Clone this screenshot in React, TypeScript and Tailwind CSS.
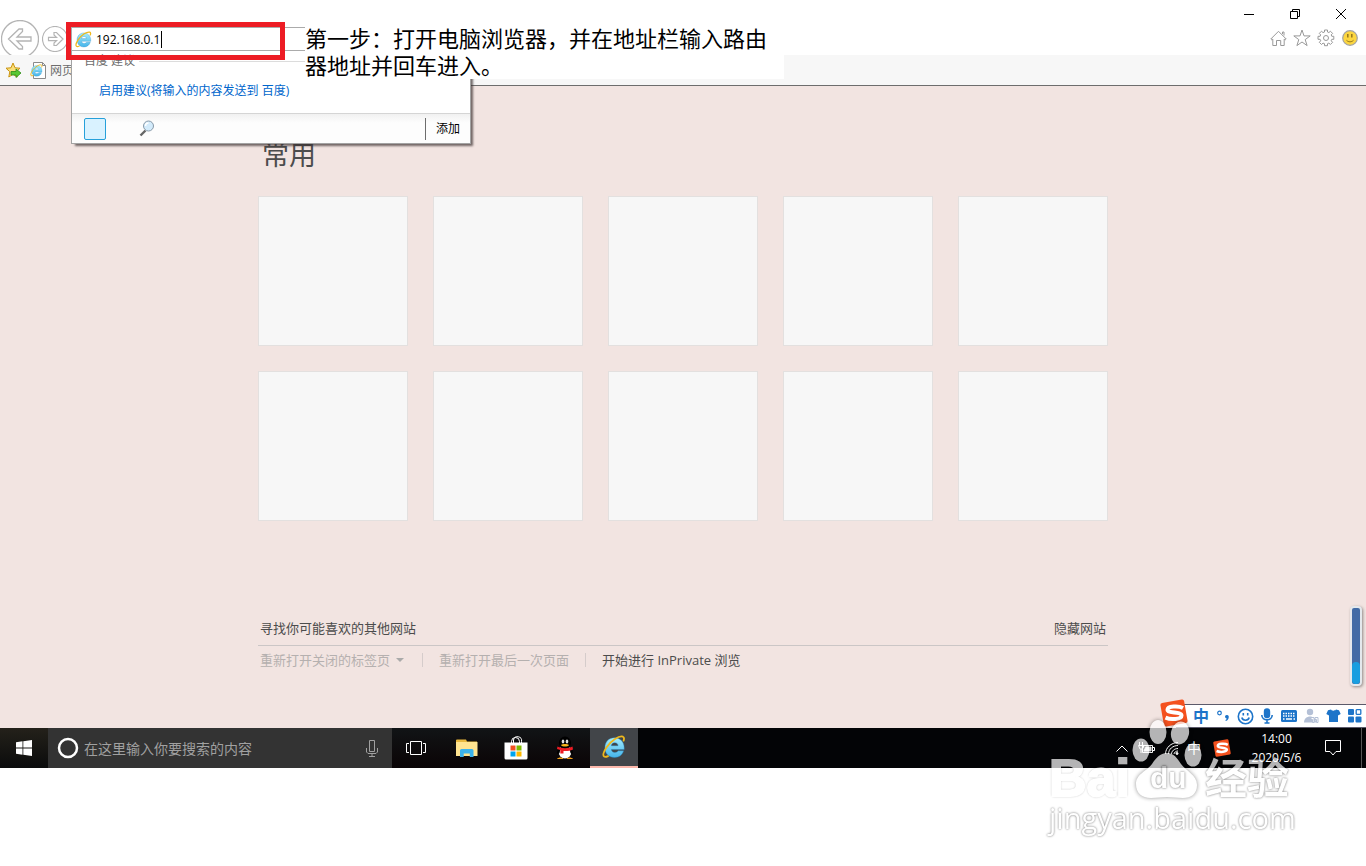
import { useState } from 'react';

const uiFont = "font-['Open_Sans','Noto_Sans_CJK_SC',sans-serif]";

function IeLogo({ size }: { size: number }) {
  return (
    <svg width={size} height={size} viewBox="0 0 24 24" fill="none">
      <defs>
        <linearGradient id="ie" x1="0" y1="0" x2="0" y2="1">
          <stop offset="0" stopColor="#a4ecfd" />
          <stop offset="1" stopColor="#45b4ea" />
        </linearGradient>
      </defs>
      <path
        d="M12.5 2.800c5.700 0 9.700 4.200 9.700 10v1.800H9.300c.3 1.900 1.700 2.900 3.600 2.900 1.500 0 2.600-.6 3.200-1.700h5.500c-1.200 4.200-4.600 6.700-9 6.700-5.700 0-9.700-4-9.700-9.800s3.900-9.900 9.600-9.900zM9.300 10.700h6.800c-.2-1.900-1.500-3-3.400-3s-3.200 1.100-3.400 3z"
        fill="url(#ie)"
        stroke="#2583bd"
        strokeWidth="0.4"
      />
      <path
        d="M21.600 5.600C22.400 3.400 22 2.200 20.900 1.700 17.200.4 9 5.500 4.600 12.200c-3 4.600-4 8.300-2.400 9.400.9.600 2.200.3 3.800-.5"
        stroke="#efb81c"
        strokeWidth="1.800"
        strokeLinecap="round"
      />
    </svg>
  );
}

function SogouLogo({ size }: { size: number }) {
  return (
    <svg width={size} height={size} viewBox="0 0 28 28" fill="none">
      <rect x="2" y="2" width="24" height="24" rx="2" fill="#f4511e" transform="rotate(-10 14 14)" />
      <path
        d="M23 9C18.500 6.500 7.500 7 7.500 10.700c0 3.800 14 1.800 14 5.800 0 3.900-10.500 4.600-16 2.200"
        stroke="#fff"
        strokeWidth="4"
      />
    </svg>
  );
}

function Header() {
  return (
    <header className="flex h-[55px] items-start justify-between overflow-hidden bg-white">
      <div className="flex items-start pl-px pt-5">
        <button aria-label="后退">
          <svg width="38" height="38" viewBox="0 0 38 38" fill="none" stroke="#b4b4b4">
            <circle cx="19" cy="19" r="18.500" strokeWidth="1.300" />
            <path d="M7.500 19 18 9h3.500v2.500L16 17h14v4H16l5.500 5.500V29H18z" strokeWidth="1.300" />
          </svg>
        </button>
        <button aria-label="前进" className="ml-[3px] mt-1.5">
          <svg width="26" height="26" viewBox="0 0 26 26" fill="none" stroke="#b4b4b4">
            <circle cx="13" cy="13" r="12.500" strokeWidth="1.200" />
            <path d="M21 13l-6.500 6.500H12V17l2.500-2.300h-8v-3.400h8L12 9V6.500h2.500z" strokeWidth="1.200" />
          </svg>
        </button>
        <AddressBar />
      </div>
      <div className="flex flex-col items-end">
        <div className="flex h-7 pr-0.5">
          <button aria-label="最小化" className="flex w-[46px] items-center justify-center">
            <svg width="10" height="10" stroke="#000">
              <path d="M0 5.500h10" />
            </svg>
          </button>
          <button aria-label="还原" className="flex w-[46px] items-center justify-center">
            <svg width="10" height="10" fill="none" stroke="#000">
              <path d="M.5 2.500h7v7h-7zM2.500 2.500v-2h7v7h-2" />
            </svg>
          </button>
          <button aria-label="关闭" className="flex w-[46px] items-center justify-center">
            <svg width="10" height="10" stroke="#000">
              <path d="M0 0l10 10M10 0 0 10" />
            </svg>
          </button>
        </div>
        <div className="flex h-5 pr-1">
          <button aria-label="主页" className="flex w-6 items-center justify-center">
            <svg width="17" height="17" viewBox="0 0 17 17" fill="none" stroke="#999">
              <path d="M.8 9 8.500 1.300 16.200 9l-1 .9-1-.8v6.400h-3.500v-5H6.500v5H2.800V9.100l-1 .8zM12.500 4V2h1.500v3.500" />
            </svg>
          </button>
          <button aria-label="收藏夹" className="flex w-6 items-center justify-center">
            <svg width="18" height="18" viewBox="0 0 18 18" fill="none" stroke="#999">
              <path d="M9 1l2 5.900h6.200l-5 3.700 1.900 6L9 13l-5.100 3.600 1.900-6-5-3.700H7z" />
            </svg>
          </button>
          <button aria-label="工具" className="flex w-6 items-center justify-center">
            <svg width="18" height="18" viewBox="0 0 18 18" fill="none" stroke="#999">
              <path d="M7.500 1h3v2l1.400.6 1.500-1.400 2.200 2.200-1.400 1.500.6 1.400h2v3h-2l-.6 1.500 1.400 1.500-2.200 2.200-1.500-1.400-1.400.6v2h-3v-2L6 14.100l-1.500 1.400-2.200-2.200 1.400-1.500-.6-1.500H1v-3h2.100l.6-1.400-1.400-1.500 2.200-2.200L6 3.600 7.500 3z" />
              <circle cx="9" cy="9" r="2.500" />
            </svg>
          </button>
          <button aria-label="反馈" className="flex w-6 items-center justify-center">
            <svg width="16" height="16" viewBox="0 0 16 16" fill="none">
              <circle cx="8" cy="8" r="7.300" fill="#fcd640" stroke="#a3a3a3" strokeWidth="1.200" />
              <path d="M5.800 4v3.500M9.800 4v3.500" stroke="#94771c" strokeWidth="1.500" />
              <path d="M4.500 10.300c2 2 5 2 7 0" stroke="#94771c" />
            </svg>
          </button>
        </div>
      </div>
    </header>
  );
}

function AddressBar() {
  const [url, setUrl] = useState('192.168.0.1');

  return (
    <div className="ml-[3px] mt-[7px] flex h-6 w-[234px] items-center border-y border-l border-[#ababab] bg-white pl-[3px]">
      <IeLogo size={17} />
      <input
        type="text"
        aria-label="地址"
        value={url}
        onChange={(e) => setUrl(e.target.value)}
        className="ml-1 w-[65px] pt-0.5 text-xs text-black outline-none"
      />
      <span className="h-[17px] w-px bg-black" />
    </div>
  );
}

function FavoritesBar() {
  return (
    <nav className="flex h-[31px] items-center border-b border-[#6d6d6d] bg-[#f7f7f7] pl-[5px]">
      <button aria-label="添加到收藏夹栏">
        <svg width="17" height="17" viewBox="0 0 17 17">
          <path d="M8 1l2 4.800 5 .4-3.800 3.500 1 5.300L8 12.300 3.800 15l1-5.300L1 6.200l5-.4z" fill="#fbe07a" stroke="#c99411" />
          <path d="M6 9.500h5V7l5 4-5 4.500V13H6z" fill="#59c834" stroke="#2f8c18" strokeWidth="0.800" />
        </svg>
      </button>
      <a href="#" className="ml-2 flex items-center text-xs text-[#6d6d6d]">
        <span className="relative">
          <svg width="17" height="17" viewBox="0 0 17 17">
            <path d="M3.500.5h9l3 3v13h-12zM12.500.5v3h3" fill="#fff" stroke="#8a8a8a" />
          </svg>
          <span className="absolute left-0 top-0.5">
            <IeLogo size={13} />
          </span>
        </span>
        <span className="ml-[3px] pt-0.5">网页</span>
      </a>
    </nav>
  );
}

function SuggestionMenu() {
  return (
    <div className="absolute left-[71px] top-[51px] w-[400px] border border-t-0 border-[#a3a3a3] bg-white shadow-[3px_3px_2px_-1px_rgba(60,50,50,0.7)]">
      <div className="flex h-[19px] items-center pl-3 text-xs text-[#6d6d6d]">
        <span>百度 建议</span>
        <span className="ml-1 mt-0.5 h-px flex-1 bg-[#dcdcdc]" />
      </div>
      <a href="#" className="flex h-[43px] items-center pb-0.5 pl-[27px] text-xs text-[#0066cc]">
        启用建议(将输入的内容发送到 百度)
      </a>
      <div className="flex h-[30px] items-center border-t border-[#d5d5d5] bg-linear-to-b from-[#f1f1f1] to-[#fdfdfd] to-30% pl-3">
        <button aria-label="百度" className="size-[22px] rounded-xs border border-[#26a0da] bg-[#d9f2ff]" />
        <button aria-label="搜索" className="ml-[33px]">
          <svg width="16" height="17" viewBox="0 0 16 17">
            <path d="M6.500 10.500l-5 5" stroke="#666" strokeWidth="2.400" />
            <circle cx="9.500" cy="6" r="5" fill="#d3ebfb" stroke="#8899a8" />
            <path d="M6.500 6c0-2 1.500-3 3-3" fill="none" stroke="#fff" strokeWidth="1.500" />
          </svg>
        </button>
        <span className="ml-auto h-[22px] w-px bg-[#6d6d6d]" />
        <button className="px-2.5 text-xs text-black">添加</button>
      </div>
    </div>
  );
}

function NewTabPage() {
  return (
    <main className="relative bg-[#f2e4e1] pt-[51px] pb-[58px]">
      <div className="mx-auto max-w-[850px] text-[13px] leading-5 text-[#4c4c4c]">
        <h1 className="pl-1 text-[27px] leading-9">常用</h1>
        <div className="mt-[23px] grid grid-cols-5 gap-[25px]">
          {Array.from({ length: 10 }, (_, i) => (
            <div key={i} className="aspect-square border border-[#e3e0df] bg-[#f7f7f7]" />
          ))}
        </div>
        <div className="mt-[97px] flex h-7 justify-between border-b border-[#cbc6c6] px-0.5">
          <a href="#">寻找你可能喜欢的其他网站</a>
          <a href="#">隐藏网站</a>
        </div>
        <div className="flex items-center pl-0.5 pt-1">
          <button className="flex items-center text-[#b5b0af]" disabled>
            重新打开关闭的标签页
            <svg width="8" height="4" className="ml-1.5">
              <path d="M0 0h8L4 4z" fill="#aaa" />
            </svg>
          </button>
          <span className="ml-[18px] h-3.5 w-px bg-[#d5cccb]" />
          <button className="ml-4 text-[#b5b0af]" disabled>重新打开最后一次页面</button>
          <span className="ml-4 h-3.5 w-px bg-[#d5cccb]" />
          <a href="#" className="ml-4">开始进行 InPrivate 浏览</a>
        </div>
      </div>

      <div className="absolute right-1 bottom-[42px] flex h-20 w-3 items-end rounded-sm border-2 border-[#e4e8ec] bg-[#416ba6] shadow-[1px_1px_3px_rgba(0,0,0,0.4)]">
        <div className="h-[22px] w-full rounded-sm bg-[#189ee0]" />
      </div>
      <ImeBar />
    </main>
  );
}

function ImeBar() {
  return (
    <div className="absolute right-0 bottom-0 flex h-6 w-[190px] items-center border-y border-[#5c5a6a] bg-white text-[#1d74c9]">
      <span className="absolute -left-4 bottom-0">
        <SogouLogo size={28} />
      </span>
      <div className="ml-auto flex items-center">
        <button className="w-[22px] text-base leading-5 font-bold">中</button>
        <button aria-label="标点" className="flex w-[22px] justify-center">
          <svg width="14" height="14" viewBox="0 0 14 14">
            <circle cx="3.500" cy="4" r="1.800" fill="none" stroke="currentColor" strokeWidth="1.200" />
            <path d="M9 7.500a2 2 0 0 1 3.800 0c0 2.500-1.200 4-3 4.500l-.4-1c.8-.3 1.200-.9 1.300-1.600C9.700 9.400 9 8.600 9 7.500z" fill="currentColor" />
          </svg>
        </button>
        <button aria-label="表情" className="flex w-[22px] justify-center">
          <svg width="17" height="17" viewBox="0 0 17 17" fill="none" stroke="currentColor" strokeWidth="1.600">
            <circle cx="8.500" cy="8.500" r="7.200" />
            <path d="M6.300 5v2.500M10.700 5v2.500M4.800 9.500c1 3.600 6.400 3.600 7.400 0" />
          </svg>
        </button>
        <button aria-label="语音" className="flex w-[22px] justify-center">
          <svg width="14" height="16" viewBox="0 0 14 16" fill="none" stroke="currentColor" strokeWidth="1.600">
            <rect x="4.600" y="1" width="4.800" height="8.500" rx="2.400" fill="currentColor" />
            <path d="M1.800 7c0 6.500 10.400 6.500 10.400 0M7 12v3M4.500 15h5" />
          </svg>
        </button>
        <button aria-label="键盘" className="flex w-[22px] justify-center">
          <svg width="16" height="12" viewBox="0 0 16 12">
            <rect width="16" height="12" rx="1.500" fill="currentColor" />
            <path d="M2 3.500h12M2 6h12" stroke="#fff" strokeWidth="1.400" strokeDasharray="1.500 1" />
            <path d="M2 9h1.500M5 9h6M12.500 9H14" stroke="#fff" strokeWidth="1.400" />
          </svg>
        </button>
        <button aria-label="账户" className="flex w-[22px] justify-center text-[#b4c0d6]">
          <svg width="16" height="16" viewBox="0 0 16 16">
            <circle cx="7" cy="4" r="3.200" fill="currentColor" />
            <path d="M1 14.500c0-8 12-8 12 0z" fill="currentColor" />
            <path d="M8 9.500h3v5H9.500v-3H8zM12 9.500h3v5h-1.500v-3H12z" fill="#fff" stroke="currentColor" />
          </svg>
        </button>
        <button aria-label="皮肤" className="flex w-[22px] justify-center">
          <svg width="15" height="14" viewBox="0 0 15 14">
            <path d="M5 .5c.8 1.600 4.200 1.600 5 0l3 .8 1.700 3.700-2.700 1.500V13H3V6.500L.3 5 2 1.300z" fill="currentColor" />
          </svg>
        </button>
        <button aria-label="工具箱" className="flex w-[22px] justify-center">
          <svg width="14" height="14" viewBox="0 0 14 14" fill="currentColor">
            <rect width="6" height="6" rx="1" />
            <rect y="7.500" width="6" height="6" rx="1" />
            <rect x="7.500" y="7.500" width="6" height="6" rx="1" />
            <rect x="8.200" y=".7" width="4.600" height="4.600" rx=".5" fill="none" stroke="currentColor" strokeWidth="1.300" />
          </svg>
        </button>
      </div>
    </div>
  );
}

function Taskbar() {
  return (
    <footer className="flex h-10 bg-[#030406] text-white">
      <button aria-label="开始" className="flex w-12 items-center justify-center bg-linear-to-b from-[#24211a] to-[#0b0c0c]">
        <svg width="16" height="16" viewBox="0 0 16 16" fill="#fff">
          <path d="M0 2.200 6.500 1.300v6.300H0zM7.300 1.200 16 0v7.600H7.300zM0 8.400h6.500v6.300L0 13.800zM7.300 8.400H16V16l-8.700-1.200z" />
        </svg>
      </button>
      <label className="flex w-[344px] items-center bg-[#333] pl-[9px] pr-3.5">
        <svg width="22" height="22" fill="none" stroke="#fff" strokeWidth="2.500">
          <circle cx="11" cy="11" r="9" />
        </svg>
        <input
          type="text"
          aria-label="搜索"
          placeholder="在这里输入你要搜索的内容"
          className="ml-[5px] min-w-0 flex-1 pt-0.5 text-sm outline-none placeholder:text-[#a0a0a0]"
        />
        <svg width="12" height="17" viewBox="0 0 12 17" fill="none" stroke="#a0a0a0">
          <path d="M3.500.5h5v11h-5zM.5 8v4l1.500 1.500h8l1.500-1.500V8M6 13.500v3M3 16.500h6" />
        </svg>
      </label>
      <div className="flex bg-linear-to-b from-[#111416] to-[#0a0506]">
        <button aria-label="任务视图" className="flex w-12 items-center justify-center">
          <svg width="20" height="14" viewBox="0 0 20 14" fill="none" stroke="#fff">
            <path d="M4.500.5h11v13h-11zM3 2.500H.5v9H3M17 2.500h2.500v9H17" />
          </svg>
        </button>
        <div className="ml-[3px] flex gap-px">
          <button aria-label="文件资源管理器" className="flex w-12 items-center justify-center">
            <svg width="22" height="18" viewBox="0 0 22 18">
              <path d="M0 1.500Q0 .5 1 .5h9l1 2h10V17H0z" fill="#e9b93f" />
              <path d="M0 3h21.500v14H0z" fill="#ffe490" />
              <path d="M4 18v-6.500Q4 10 5.500 10H16q1.500 0 1.500 1.500V18h-3.700v-3.500H7.700V18z" fill="#3bb3ec" />
            </svg>
          </button>
          <button aria-label="应用商店" className="flex w-12 items-center justify-center">
            <svg width="24" height="24" viewBox="0 0 24 24">
              <path d="M7.500 8V5.500a4 4 0 0 1 8 0V8M9.500 8V4a3.500 3.500 0 0 1 8 1.500V8" fill="none" stroke="#fff" />
              <path d="M.5 6.500h23V22q0 1.500-1.500 1.500H2Q.5 23.500.5 22z" fill="#fff" />
              <path d="M6.500 9.500h5v5h-5z" fill="#f25022" />
              <path d="M12.500 9.500h5v5h-5z" fill="#7fba00" />
              <path d="M6.500 15.500h5v5h-5z" fill="#00a4ef" />
              <path d="M12.500 15.500h5v5h-5z" fill="#ffb900" />
            </svg>
          </button>
          <button aria-label="QQ" className="flex w-12 items-center justify-center">
            <svg width="18" height="24" viewBox="0 0 18 24">
              <ellipse cx="9" cy="16" rx="6.500" ry="6.500" fill="#fff" />
              <path d="M3 12C1 14 .5 17 1.500 18c1 .5 2-1 2-1l1-4zM15 12c2 2 2.500 5 1.500 6-1 .5-2-1-2-1l-1-4z" fill="#000" />
              <ellipse cx="9" cy="7" rx="6" ry="6.500" fill="#000" />
              <ellipse cx="7" cy="5.500" rx="1.300" ry="2" fill="#ddd" />
              <ellipse cx="11" cy="5.500" rx="1.300" ry="2" fill="#ddd" />
              <path d="M5 9c2-1.200 6-1.200 8 0-1 2-7 2-8 0z" fill="#f6b31b" />
              <path d="M1.500 10.500c4 2.300 11 2.300 15 0l.5 3c-3 1.300-6 1.800-9.500 1.500v2.500H4.300v-3.500L1 13z" fill="#ed1c24" />
              <path d="M1 23c1-2 6-2 6.500 0zM10.500 23c.5-2 5.500-2 6.500 0z" fill="#f6a21b" />
            </svg>
          </button>
          <button aria-label="Internet Explorer" className="flex w-12 items-center justify-center border-b-2 border-[#fcb8ac] bg-[#424549]">
            <IeLogo size={24} />
          </button>
        </div>
      </div>

      <div className="ml-auto flex items-center">
        <button aria-label="显示隐藏的图标" className="flex w-6 justify-center">
          <svg width="12" height="7" fill="none" stroke="#fff">
            <path d="M.5 6.500 6 1l5.500 5.500" />
          </svg>
        </button>
        <span className="flex w-6 justify-center">
          <svg width="17" height="13" viewBox="0 0 17 13" fill="none" stroke="#fff">
            <path d="M4.500 3.500h10v7h-10zM14.500 5.500h2v3h-2" />
            <path d="M8 5h5v4H6z" fill="#fff" />
            <path d="M1.500 0v3M4.500 0v3M.5 3.500h5v2L4 7H2zM3 7v4" />
          </svg>
        </span>
        <span className="flex w-6 justify-center pl-1">
          <svg width="14" height="13" viewBox="0 0 14 13" fill="none" stroke="#fff">
            <path d="M.5 12C.5 6 6 .5 13 .5M3.500 12c0-5 4.500-8.500 9.500-8.500M6.500 12c0-3 3-5.500 6.500-5.500M9 12c0-1.500 2-3 4-3" />
            <circle cx="12" cy="11.500" r="1" fill="#fff" />
          </svg>
        </span>
        <span className="w-6 text-center text-sm">中</span>
        <span className="flex w-8 justify-center">
          <SogouLogo size={18} />
        </span>
        <time className="w-[77px] text-center text-xs leading-[19px]">
          <span className="block">14:00</span>
          <span className="block">2020/5/6</span>
        </time>
        <button aria-label="通知" className="flex w-9 justify-center">
          <svg width="16" height="16" viewBox="0 0 16 16" fill="none" stroke="#fff">
            <path d="M.5.5h15v11H11L8 15l-3-3.500H.5z" />
          </svg>
        </button>
        <span className="ml-2.5 mr-1 h-10 w-px bg-[#555]" />
      </div>
    </footer>
  );
}

function Watermark() {
  return (
    <div className="pointer-events-none absolute top-[720px] right-[71px] w-[246px] text-white opacity-70 [text-shadow:0_0_2px_rgba(0,0,0,0.6),0_0_3px_rgba(0,0,0,0.35)]">
      <div className="flex h-[82px] items-end whitespace-nowrap">
        <span className="w-[83px] font-['Liberation_Sans',sans-serif] text-[52px] leading-[48px] font-bold [-webkit-text-stroke:2px_white]">Bai</span>
        <span className="relative h-[82px] w-[73px]">
          <svg
            width="70"
            height="82"
            viewBox="0 0 70 82"
            fill="#fff"
            className="drop-shadow-[0_0_2px_rgba(0,0,0,0.6)]"
          >
            <ellipse cx="26" cy="12" rx="8.500" ry="12" />
            <ellipse cx="48" cy="13" rx="9" ry="11.500" transform="rotate(12 48 13)" />
            <ellipse cx="9" cy="30" rx="8.500" ry="11.500" />
            <ellipse cx="61" cy="35" rx="8.500" ry="11.500" />
            <path d="M35 33c7 0 10 5 14 11 5 7 16 11 16 21 0 9-6 13-14 13-6 0-10-1-16-1s-10 1-16 1C10 78 4 73 4 64c0-10 11-13 16-20 4-6 8-11 15-11z" />
          </svg>
          <span className="absolute top-[42px] left-[18px] font-['Liberation_Sans',sans-serif] text-[30px] leading-8 font-bold">du</span>
        </span>
        <span className="font-['Noto_Sans_CJK_SC',sans-serif] text-[42px] leading-[52px] font-bold">经验</span>
      </div>
      <div className="font-['Open_Sans',sans-serif] text-[29px] leading-8 whitespace-nowrap">jingyan.baidu.com</div>
    </div>
  );
}

export default function App() {
  return (
    <div className={`relative min-h-screen overflow-hidden bg-white ${uiFont}`}>
      <Header />
      <FavoritesBar />
      <NewTabPage />
      <Taskbar />
      <SuggestionMenu />
      <div className="absolute top-[22px] left-[66px] h-[38px] w-[219px] border-5 border-[#ed1c24]" />
      <p className="absolute top-6 left-[305px] w-[479px] bg-white pb-px font-['Noto_Sans_CJK_SC',sans-serif] text-[22px] leading-[27px] text-black">
        第一步：打开电脑浏览器，并在地址栏输入路由器地址并回车进入。
      </p>
      <Watermark />
    </div>
  );
}
